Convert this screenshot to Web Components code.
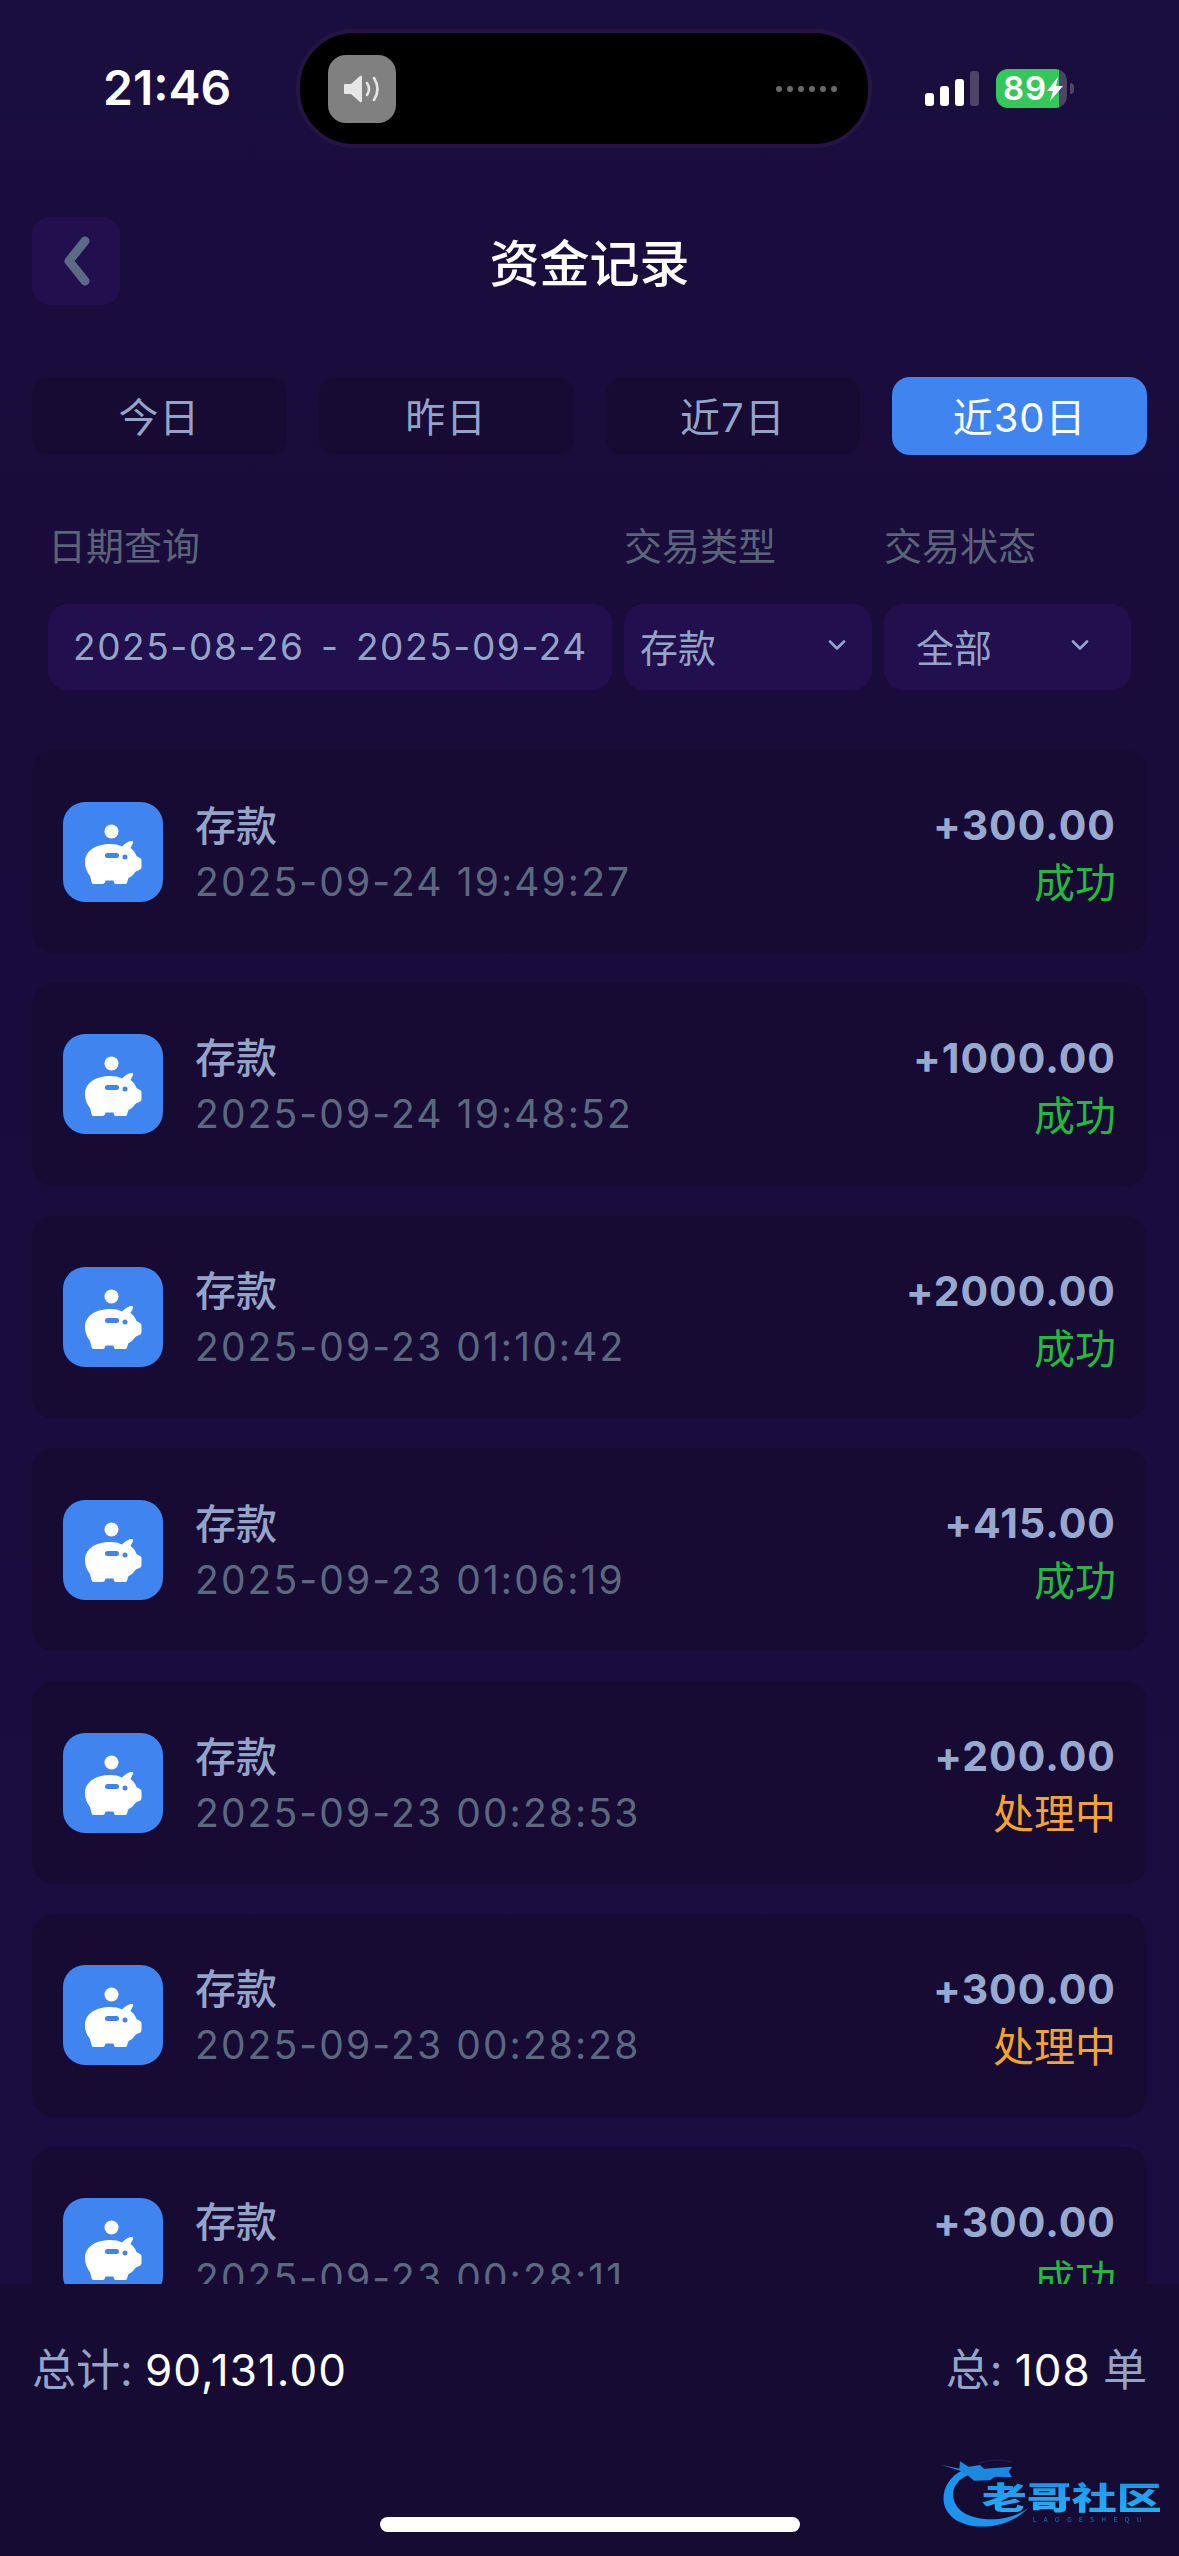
<!DOCTYPE html>
<html lang="zh">
<head>
<meta charset="utf-8">
<title>资金记录</title>
<style>
  html, body { margin: 0; padding: 0; background: #1a0e3e; }
  body { font-family: Inter, "Noto Sans CJK SC", sans-serif; }
</style>
</head>
<body>
<app-shell>
  <status-bar slot="top" time="21:46" battery="89"></status-bar>
  <page-header slot="top">资金记录</page-header>
  <range-tabs slot="top" active="3"></range-tabs>
  <filter-bar slot="top"></filter-bar>
  <record-list>
    <record-item time="2025-09-24 19:49:27" amount="+300.00" state="成功"></record-item>
    <record-item time="2025-09-24 19:48:52" amount="+1000.00" state="成功"></record-item>
    <record-item time="2025-09-23 01:10:42" amount="+2000.00" state="成功"></record-item>
    <record-item time="2025-09-23 01:06:19" amount="+415.00" state="成功"></record-item>
    <record-item time="2025-09-23 00:28:53" amount="+200.00" state="处理中"></record-item>
    <record-item time="2025-09-23 00:28:28" amount="+300.00" state="处理中"></record-item>
    <record-item time="2025-09-23 00:28:11" amount="+300.00" state="成功"></record-item>
  </record-list>
  <summary-bar slot="bottom" total="90,131.00" count="108"></summary-bar>
</app-shell>

<script>
const SANS = `Inter, "Noto Sans CJK SC", sans-serif`;

class AppShell extends HTMLElement {
  constructor() {
    super();
    this.attachShadow({ mode: "open" }).innerHTML = `
      <style>
        :host { display: flex; flex-direction: column; position: relative; width: 1179px; height: 2556px; overflow: hidden;
          background: linear-gradient(#1a0e3e, #190c3b 28%, #1c0d41 100%); }
        main { flex: 1; min-height: 0; overflow: hidden; }
      </style>
      <slot name="top"></slot>
      <main><slot></slot></main>
      <slot name="bottom"></slot>
    `;
  }
}

class StatusBar extends HTMLElement {
  connectedCallback() {
    const time = this.getAttribute("time");
    const battery = this.getAttribute("battery");
    this.attachShadow({ mode: "open" }).innerHTML = `
      <style>
        :host { display: flex; align-items: center; height: 119px; padding: 29px 0 0 103px; font-family: ${SANS}; color: #fff; }
        .time { width: 193px; font-size: 48px; font-weight: 600; line-height: 1; margin-top: -1px; }
        .island { box-sizing: border-box; width: 576px; height: 119px; display: flex; align-items: center; justify-content: space-between;
          padding: 0 31px 0 28px; background: #000; border: 4px solid #251545; border-radius: 58px; }
        .tile { width: 68px; height: 68px; border-radius: 18px; background: #808080; display: flex; align-items: center; justify-content: center; }
        .dots { display: flex; gap: 5px; }
        .dots i { width: 6px; height: 6px; border-radius: 50%; background: #6a6a6a; }
        .signal { display: flex; align-items: flex-end; gap: 6px; height: 35px; margin-left: 53px; }
        .signal i { width: 9px; border-radius: 3px; background: #fff; }
        .battery { position: relative; width: 71px; height: 39px; margin-left: 17px; border-radius: 12px; display: flex; align-items: center;
          background: linear-gradient(90deg, #34c759 63px, #4e4468 63px); font-size: 33px; font-weight: 600; }
        .battery span { padding-left: 7px; letter-spacing: 1px; line-height: 1; }
        .battery svg { position: absolute; left: 51px; top: 8px; }
        .nub { width: 4px; height: 11px; margin-left: 3px; background: #4e4468; border-radius: 0 5px 5px 0; }
      </style>
      <div class="time">${time}</div>
      <div class="island">
        <div class="tile">
          <svg width="36" height="28" viewBox="0 0 36 28">
            <path d="M1 9h6l9-8q2-1 2 1v24q0 2-2 1l-9-8H1q-1 0-1-1V10q0-1 1-1z" fill="#e6e6e6"/>
            <path d="M23 8q4 6 0 12M30 3q7 11 0 22" fill="none" stroke="#e6e6e6" stroke-width="2.6" stroke-linecap="round"/>
          </svg>
        </div>
        <div class="dots"><i></i><i></i><i></i><i></i><i></i><i></i></div>
      </div>
      <div class="signal">
        <i style="height:13px"></i><i style="height:20px"></i><i style="height:27px"></i><i style="height:35px;background:#4e4468"></i>
      </div>
      <div class="battery">
        <span>${battery}</span>
        <svg width="16" height="24" viewBox="0 0 16 24"><path d="M11 0 0 14h6L3 24 16 9H9z" fill="#fff"/></svg>
      </div>
      <div class="nub"></div>
    `;
  }
}

class PageHeader extends HTMLElement {
  constructor() {
    super();
    this.attachShadow({ mode: "open" }).innerHTML = `
      <style>
        :host { display: block; position: relative; margin: 69px 32px 0; height: 88px; font-family: ${SANS}; }
        .bar { display: flex; align-items: center; justify-content: center; height: 100%; }
        .back { position: absolute; left: 0; top: 0; width: 88px; height: 88px; border-radius: 18px; background: #21104d;
          display: flex; align-items: center; justify-content: center; }
        h1 { margin: 6px 0 0; font-size: 50px; font-weight: 500; color: #fff; line-height: 1; }
      </style>
      <div class="bar">
        <div class="back">
          <svg width="30" height="50" viewBox="0 0 30 50"><path d="M24 5 8 25l16 20" fill="none" stroke="#5d6a85" stroke-width="9" stroke-linecap="round" stroke-linejoin="round"/></svg>
        </div>
        <h1><slot></slot></h1>
      </div>
    `;
  }
}

class RangeTabs extends HTMLElement {
  connectedCallback() {
    const active = Number(this.getAttribute("active"));
    const tabs = ["今日", "昨日", "近7日", "近30日"];
    this.attachShadow({ mode: "open" }).innerHTML = `
      <style>
        :host { display: grid; grid-template-columns: repeat(4, 1fr); gap: 32px; margin: 72px 32px 0; height: 78px; font-family: ${SANS}; }
        div { display: flex; align-items: center; justify-content: center; border-radius: 18px; background: #170b33;
          color: #94a3c8; font-size: 40px; letter-spacing: 1px; padding-bottom: 2px; }
        div.on { background: #4084f0; color: #fff; }
      </style>
      ${tabs.map((t, i) => `<div class="${i === active ? "on" : ""}">${t}</div>`).join("")}
    `;
  }
}

class FilterBar extends HTMLElement {
  constructor() {
    super();
    const chevron = `<svg width="18" height="10" viewBox="0 0 18 10"><path d="M2 1.500l7 7 7-7" fill="none" stroke="#94a3c8" stroke-width="2.600" stroke-linecap="round" stroke-linejoin="round"/></svg>`;
    this.attachShadow({ mode: "open" }).innerHTML = `
      <style>
        :host { display: grid; grid-template-columns: 564px 248px 247px; column-gap: 12px; row-gap: 39px; margin: 72px 0 0 48px; font-family: ${SANS}; }
        .label { color: #5b6478; font-size: 38px; line-height: 38px; }
        .box { display: flex; align-items: center; justify-content: space-between; height: 86px; box-sizing: border-box; border-radius: 20px;
          background: #22104e; color: #94a3c8; font-size: 38px; }
        .date { padding: 0 0 2px 25px; font-size: 37px; letter-spacing: 1.6px; word-spacing: -3.800px; white-space: pre; }
        .type { padding: 0 26px 4px 16px; }
        .state { padding: 0 42px 4px 32px; }
      </style>
      <div class="label">日期查询</div><div class="label">交易类型</div><div class="label">交易状态</div>
      <div class="box date">2025-08-26  -  2025-09-24</div>
      <div class="box type"><span>存款</span>${chevron}</div>
      <div class="box state"><span>全部</span>${chevron}</div>
    `;
  }
}

class RecordList extends HTMLElement {
  constructor() {
    super();
    this.attachShadow({ mode: "open" }).innerHTML = `
      <style>
        :host { display: flex; flex-direction: column; gap: 29.800px; margin-top: 60px; padding: 0 32px; }
      </style>
      <slot></slot>
    `;
  }
}

class RecordItem extends HTMLElement {
  connectedCallback() {
    const state = this.getAttribute("state");
    const color = state === "成功" ? "#22b93c" : "#f2a42c";
    this.attachShadow({ mode: "open" }).innerHTML = `
      <style>
        :host { display: flex; align-items: center; flex: none; box-sizing: border-box; height: 203px; padding: 0 31px; gap: 32px;
          background: #170b33; border-radius: 22px; font-family: ${SANS}; }
        .icon { flex: none; width: 100px; height: 100px; border-radius: 22px; background: #4084f0; }
        .icon svg { display: block; }
        .info { flex: 1; display: flex; flex-direction: column; gap: 6px; padding-top: 4px; }
        .name { color: #94a3c8; font-size: 41px; font-weight: 500; line-height: 50px; }
        .time { color: #5b6880; font-size: 39px; line-height: 50px; letter-spacing: 2.100px; }
        .side { display: flex; flex-direction: column; gap: 8px; align-items: flex-end; padding-top: 5px; }
        .amount { color: #98a9cf; font-size: 41px; font-weight: 700; line-height: 50px; letter-spacing: 1px; }
        .state { font-size: 41px; line-height: 50px; }
      </style>
      <div class="icon">
        <svg width="100" height="100" viewBox="0 0 100 100">
          <circle cx="48.500" cy="29.500" r="7" fill="#fff"/>
          <path fill="#fff" d="M22 60C22 48 34 42 47 42c5 0 9 .8 12 2.500C62 41 66 39 69 39c1.500 0 1.500 1.500.500 3l-2 4c3 2 5 5 6 8l3.500 2c1.200.8 1.500 1.500 1.500 3v6c0 1.500-1 2.500-2 3-2 .5-3.500 1-5 3-2 3-4 4-6 5l-1.500 4.500c-.3 1-1 1.500-2 1.500h-9c-1 0-1.500-.5-2-1.500l-.5-2h-8l-.5 1.500c-.3 1-1 2-2 2h-9c-1 0-2-.5-2.300-1.500L27 74c-3-4-5-8-5-14z"/>
          <rect x="42" y="51" width="14" height="5" rx="2.500" fill="#4084f0"/>
          <circle cx="62" cy="55" r="2.500" fill="#4084f0"/>
        </svg>
      </div>
      <div class="info">
        <div class="name">存款</div>
        <div class="time">${this.getAttribute("time")}</div>
      </div>
      <div class="side">
        <div class="amount">${this.getAttribute("amount")}</div>
        <div class="state" style="color:${color}">${state}</div>
      </div>
    `;
  }
}

class SummaryBar extends HTMLElement {
  connectedCallback() {
    this.attachShadow({ mode: "open" }).innerHTML = `
      <style>
        :host { display: block; position: relative; box-sizing: border-box; height: 272px; padding: 61px 32px 0; background: #160b33; font-family: ${SANS}; color: #94a3c8; font-size: 44px; }
        .row { display: flex; justify-content: space-between; line-height: 50px; }
        b { font-weight: 400; color: #fff; font-size: 44px; letter-spacing: 1px; }
        .home { position: absolute; left: 380px; top: 233px; width: 420px; height: 15px; border-radius: 8px; background: #fff; }
      </style>
      <div class="row">
        <div>总计: <b>${this.getAttribute("total")}</b></div>
        <div>总: <b>${this.getAttribute("count")}</b> 单</div>
      </div>
      <div class="home"></div>
      <water-mark></water-mark>
    `;
  }
}

class WaterMark extends HTMLElement {
  constructor() {
    super();
    this.attachShadow({ mode: "open" }).innerHTML = `
      <style>
        :host { display: block; position: absolute; right: 0; bottom: 0; width: 299px; height: 136px; }
        svg { display: block; }
        text { font-family: "Noto Sans CJK SC", sans-serif; }
      </style>
      <svg width="299" height="136" viewBox="0 0 897 408">
        <defs>
          <linearGradient id="wm" x1="0" y1="0" x2="0" y2="1">
            <stop offset="0" stop-color="#1b8fe8"/><stop offset="1" stop-color="#27b2f8"/>
          </linearGradient>
          <filter id="soft"><feGaussianBlur stdDeviation="1.800"/></filter>
        </defs>
        <g filter="url(#soft)">
          <path fill="#1b94ee" d="M250 150C190 175 170 250 215 290C260 332 380 335 447 262C395 305 290 312 240 270C205 235 215 185 265 165Z"/>
          <path fill="#1b88e0" d="M183 134L238 146L240 124L266 140L300 135L312 146L396 140L386 155L396 172L345 170L330 181L282 182L262 165L240 152Z"/>
          <path fill="none" stroke="#2a2a70" stroke-width="2" d="M296 130Q350 112 396 126"/>
          <text x="305" y="268" font-size="92" font-weight="900" fill="url(#wm)" textLength="540" lengthAdjust="spacingAndGlyphs">老哥社区</text>
          <text x="458" y="307" font-size="20" font-weight="500" fill="#1a5fae" textLength="327">LAOGESHEQU</text>
        </g>
      </svg>
    `;
  }
}

customElements.define("app-shell", AppShell);
customElements.define("status-bar", StatusBar);
customElements.define("page-header", PageHeader);
customElements.define("range-tabs", RangeTabs);
customElements.define("filter-bar", FilterBar);
customElements.define("record-list", RecordList);
customElements.define("record-item", RecordItem);
customElements.define("summary-bar", SummaryBar);
customElements.define("water-mark", WaterMark);
</script>
</body>
</html>
